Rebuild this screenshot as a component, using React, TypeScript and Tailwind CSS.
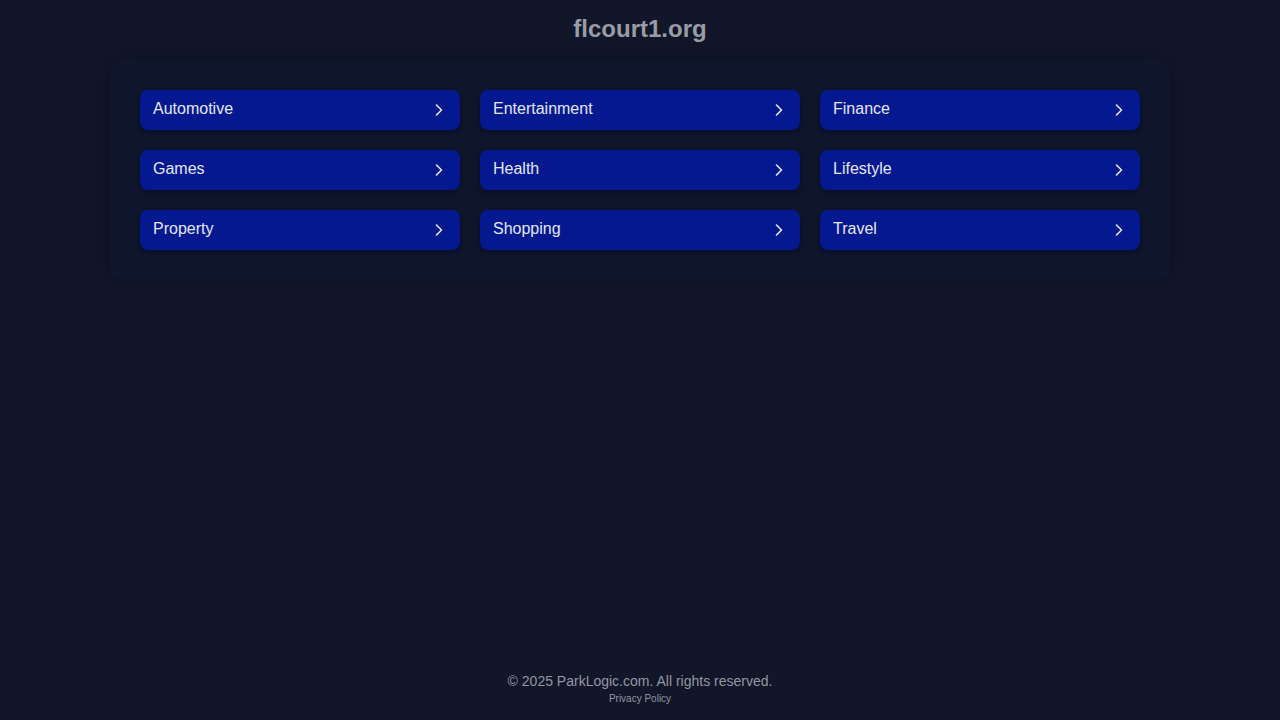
import React from 'react';

const categories = [
  'Automotive',
  'Entertainment',
  'Finance',
  'Games',
  'Health',
  'Lifestyle',
  'Property',
  'Shopping',
  'Travel',
];

const Chevron = () => (
  <svg width="12" height="12" viewBox="0 0 12 12" fill="none" className="shrink-0">
    <path d="M3.5 1l5 5-5 5" stroke="currentColor" strokeWidth="1.6" strokeLinecap="round" strokeLinejoin="round" />
  </svg>
);

export default function App() {
  return (
    <div
      className="min-h-screen bg-[#111629] flex flex-col"
      style={{ fontFamily: '"Liberation Sans", Arial, sans-serif' }}
    >
      <header className="h-[60px] flex items-center justify-center">
        <h1 className="text-[24px] font-bold text-[#9a9ca6] leading-none -mt-[2px]">flcourt1.org</h1>
      </header>

      <main className="flex justify-center">
        <div className="w-[1060px] p-[30px] bg-[#10162b] shadow-[0_0_24px_rgba(0,0,20,0.25)] rounded-xl">
          <div className="grid grid-cols-3 gap-5">
            {categories.map((c) => (
              <a
                key={c}
                href="#"
                className="h-10 px-[13px] flex items-center justify-between rounded-lg bg-[#04198f] text-[#e4e6f2] text-base shadow-[0_2px_6px_rgba(0,0,40,0.5)]"
              >
                <span className="-mt-[2px]">{c}</span>
                <span className="mr-[2px] text-[#e4e6f2]">
                  <Chevron />
                </span>
              </a>
            ))}
          </div>
        </div>
      </main>

      <footer className="mt-auto pb-[14px] flex flex-col items-center">
        <p className="text-[14px] text-[#9497a4] leading-[18px]">© 2025 ParkLogic.com. All rights reserved.</p>
        <a href="#" className="text-[10px] text-[#9497a4] leading-[14px] mt-[2px]">Privacy Policy</a>
      </footer>
    </div>
  );
}
